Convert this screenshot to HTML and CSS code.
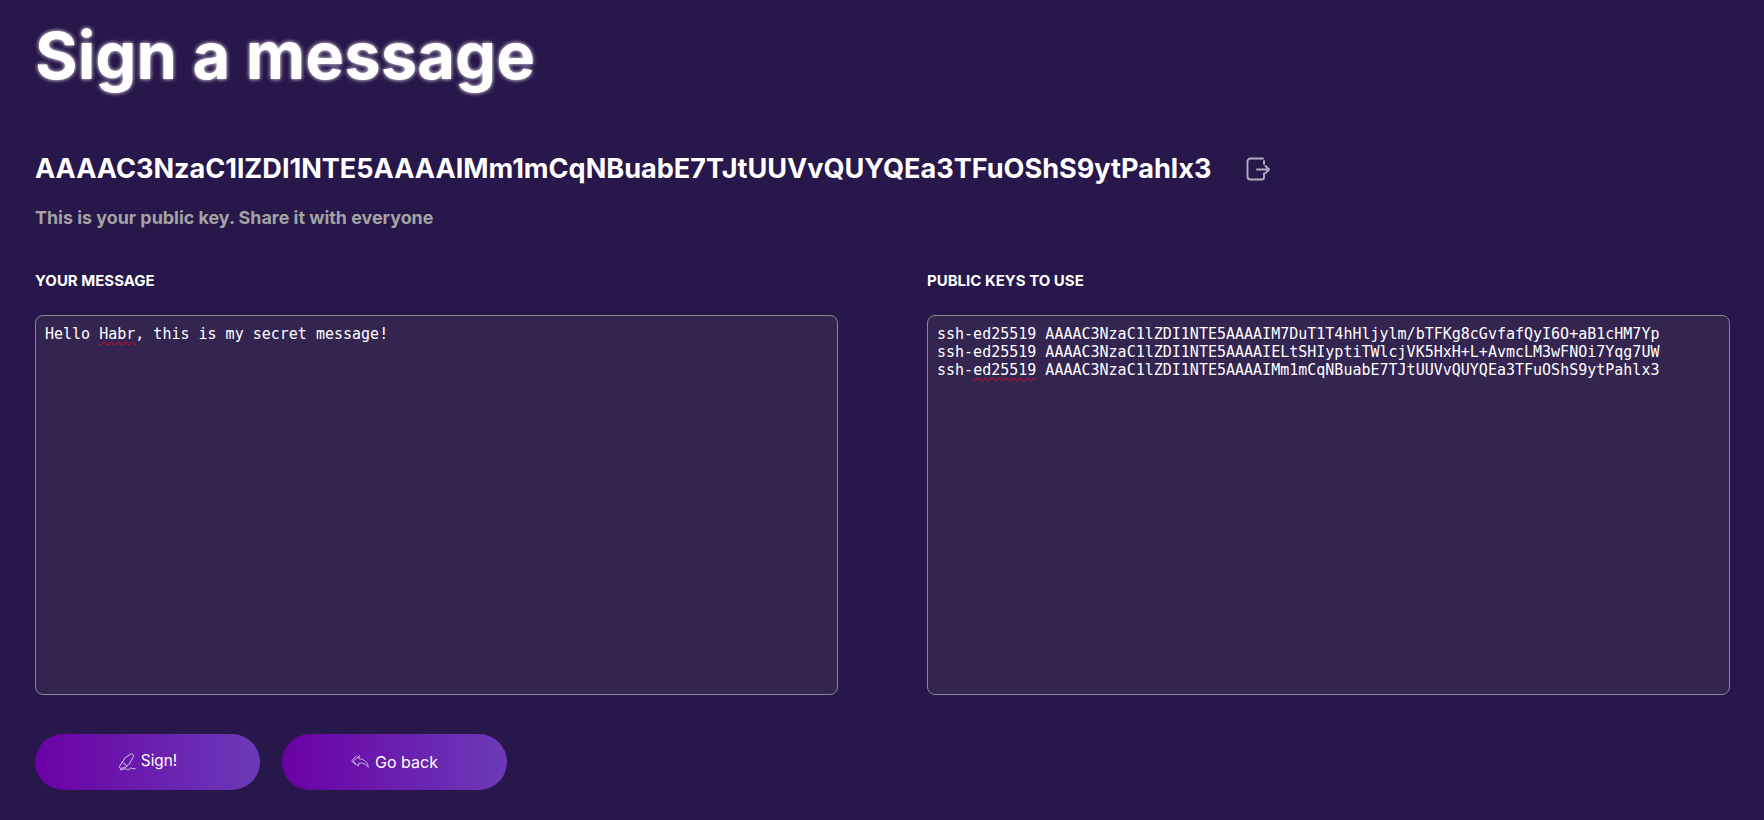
FILE: index.html
```html
<!DOCTYPE html>
<html lang="en">
<head>
<meta charset="utf-8">
<title>Sign a message</title>
<link rel="stylesheet" href="styles.css">
</head>
<body>
<main class="page">
  <h1 class="title">Sign a message</h1>
  <div class="key-row">
    <h2 class="key">AAAAC3NzaC1lZDI1NTE5AAAAIMm1mCqNBuabE7TJtUUVvQUYQEa3TFuOShS9ytPahlx3</h2>
    <svg class="logout" viewBox="0 0 24 24" fill="none" stroke="currentColor" stroke-width="1.900" stroke-linecap="round" stroke-linejoin="round"><path d="M17 1.500H4.500a3 3 0 0 0-3 3v15a3 3 0 0 0 3 3H16a2 2 0 0 0 2-2v-4"/><path d="M18 7V4"/><path d="M11 12.500h12"/><path d="M19.500 9l3.500 3.500-3.500 3.500"/></svg>
  </div>
  <p class="hint">This is your public key. Share it with everyone</p>
  <div class="fields">
    <section class="field">
      <h3 class="label">YOUR MESSAGE</h3>
      <div class="box"><div class="line">Hello <span class="typo">Habr</span>, this is my secret message!</div></div>
    </section>
    <section class="field">
      <h3 class="label">PUBLIC KEYS TO USE</h3>
      <div class="box">
        <div class="line">ssh-ed25519 AAAAC3NzaC1lZDI1NTE5AAAAIM7DuT1T4hHljylm/bTFKg8cGvfafQyI6O+aB1cHM7Yp</div>
        <div class="line">ssh-ed25519 AAAAC3NzaC1lZDI1NTE5AAAAIELtSHIyptiTWlcjVK5HxH+L+AvmcLM3wFNOi7Yqg7UW</div>
        <div class="line">ssh-<span class="typo">ed25519</span> AAAAC3NzaC1lZDI1NTE5AAAAIMm1mCqNBuabE7TJtUUVvQUYQEa3TFuOShS9ytPahlx3</div>
      </div>
    </section>
  </div>
  <div class="actions">
    <button class="btn" type="button">
      <svg class="btn-icon" viewBox="0 0 24 24" fill="none" stroke="currentColor" stroke-width="1" stroke-linecap="round" stroke-linejoin="round"><path d="M17 1.500c2-.9 4.500.8 3.800 3L15 14.500c-1.500 2.500-4.500 4.500-8 5.500l-4 .5c-1.200-.5-1.200-1.800-.6-3L9 7z"/><path d="M6.500 13l5 3.500"/><path d="M3 22.500c2 .5 4-1 6-1.500 2-.4 3 2 5 1.200 1.500-.5 2.500-2.500 4-2 1.200.4 2 1.200 5 .8"/></svg>
      <span class="btn-sign">Sign!</span>
    </button>
    <button class="btn" type="button">
      <svg class="btn-icon btn-icon-back" viewBox="0 0 24 24" fill="none" stroke="currentColor" stroke-width="1" stroke-linecap="round" stroke-linejoin="round"><path d="M11 4L3 11l7 6.500.5-4c5-.5 9 .5 12.500 5.500-.5-6-5-11-12.500-11.500z"/><path d="M7 4l-6 6.500 5 5"/></svg>
      <span class="btn-back">Go back</span>
    </button>
  </div>
</main>
</body>
</html>
```
FILE: styles.css
```css
* { box-sizing: border-box; }
html, body { margin: 0; height: 100%; }
body {
  background: #28174a;
  color: #fff;
  font-family: Inter, "Liberation Sans", sans-serif;
  overflow: hidden;
}
.page { padding: 17px 34px 0 35px; }
.title {
  margin: 0;
  font-size: 65.200px;
  line-height: 78px;
  font-weight: 700;
  text-shadow: 0 0 4px #fff;
}
.key-row {
  display: flex;
  align-items: center;
  gap: 35px;
  margin-top: 56px;
  height: 36px;
}
.key { margin: 0; font-size: 27.080px; font-weight: 700; line-height: 36px; }
.logout { width: 24px; height: 24px; color: #b4adc2; }
.hint {
  margin: 19px 0 0;
  font-size: 17.900px;
  line-height: 24px;
  font-weight: 700;
  color: #a3a3a3;
}
.fields {
  display: grid;
  grid-template-columns: 803px 803px;
  column-gap: 89px;
  margin-top: 41px;
}
.label { margin: 0 0 24px; font-size: 15px; line-height: 20px; font-weight: 700; }
.box {
  height: 380px;
  padding: 9px;
  border: 1px solid #8a8590;
  border-radius: 8px;
  background: #342450;
  font-family: "DejaVu Sans Mono", monospace;
  font-size: 15px;
  color: #fff;
  overflow: hidden;
}
.line { white-space: pre; }
.typo { text-decoration: underline wavy #f0001c 1.200px; text-underline-offset: 2px; }
.actions { display: flex; gap: 22px; margin-top: 39px; }
.btn {
  display: flex;
  align-items: center;
  justify-content: center;
  gap: 5px;
  width: 225px;
  height: 56px;
  border: 0;
  border-radius: 28px;
  background: linear-gradient(to right, #6a00a5, #6b3ab8);
  color: #fff;
  font-family: inherit;
  font-size: 16px;
}
.btn-icon { width: 18px; height: 18px; }
.btn-icon-back { opacity: 0.85; }
.btn-sign { font-size: 15.300px; margin-top: -3px; }
.btn-back { margin-top: -1px; margin-left: 1px; }
```
